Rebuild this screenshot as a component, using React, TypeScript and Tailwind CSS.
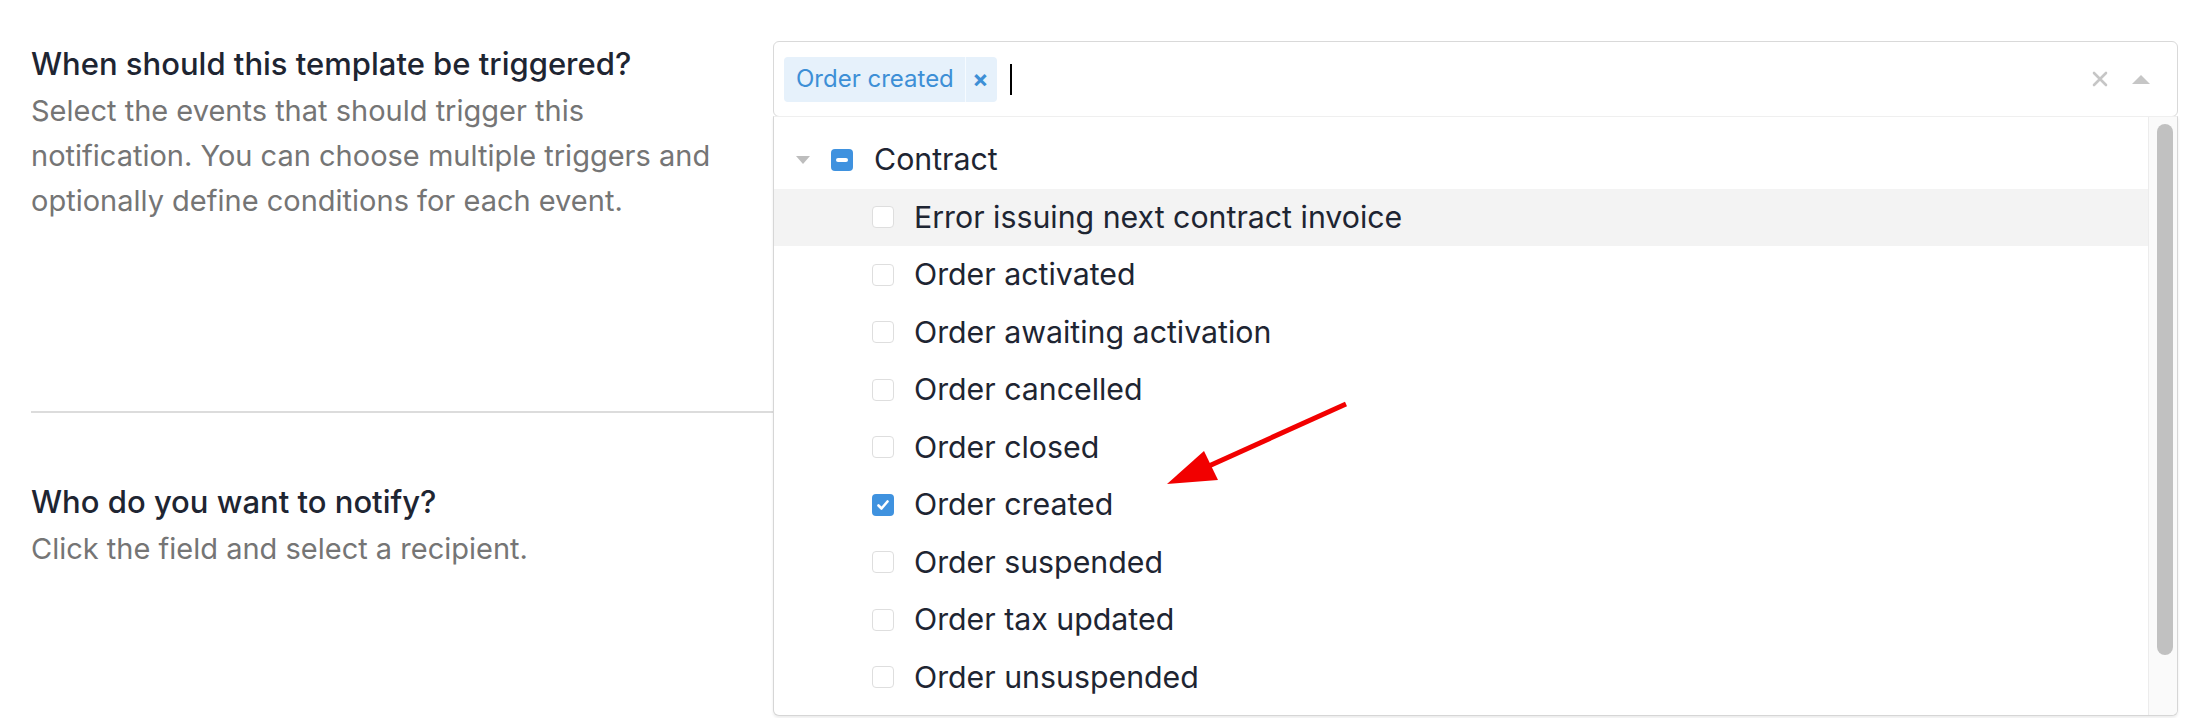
import React from "react";

const items = [
  "Error issuing next contract invoice",
  "Order activated",
  "Order awaiting activation",
  "Order cancelled",
  "Order closed",
  "Order created",
  "Order suspended",
  "Order tax updated",
  "Order unsuspended",
];

function Check({ checked }: { checked: boolean }) {
  if (checked) {
    return (
      <span className="flex h-[22px] w-[22px] shrink-0 items-center justify-center rounded-[4px] bg-[#3f92df]">
        <svg width="14" height="14" viewBox="0 0 14 14">
          <path d="M2.5 7.5 L5.5 10.5 L11.5 3.5" fill="none" stroke="#fff" strokeWidth="2.6" strokeLinecap="round" strokeLinejoin="round" />
        </svg>
      </span>
    );
  }
  return <span className="h-[22px] w-[22px] shrink-0 rounded-[4px] border-[1.5px] border-[#dedede] bg-white" />;
}

export default function App() {
  return (
    <div className="relative h-[718px] w-[2208px] overflow-hidden bg-white font-['Inter',sans-serif] text-[#1e2532]">
      <div className="flex flex-col pl-[31px] pr-[30px]">
        {/* Section 1 */}
        <div className="flex h-[411px] pt-[41px]">
          <div className="w-[742px] shrink-0">
            <div className="text-[31px] font-medium leading-[45px] text-[#1e2532]">When should this template be triggered?</div>
            <div className="mt-[2px] w-[700px] text-[29px] leading-[45px] text-[#757575]">
              Select the events that should trigger this notification. You can choose multiple triggers and optionally define conditions for each event.
            </div>
          </div>
          <div className="flex-1">
            <div className="flex h-[76px] items-center rounded-[6px] border border-[#d9d9d9] bg-white pl-[10px] pr-[26px]">
              <div className="flex h-[45px] items-center rounded-[4px] bg-[#e6f1fb]">
                <span className="pl-[12px] pr-[11px] text-[24px] text-[#3d8fd6]">Order created</span>
                <span className="h-full w-[1px] bg-[#f6fbff]" />
                <span className="flex w-[31px] items-center justify-center pr-[2px] text-[24px] font-bold text-[#3d8fd6]">×</span>
              </div>
              <span className="ml-[13px] h-[31px] w-[2px] bg-black" />
              <div className="flex-1" />
              <svg width="18" height="18" viewBox="0 0 18 18" className="mr-[22px]">
                <path d="M3 3 L15 15 M15 3 L3 15" stroke="#c6c6c6" strokeWidth="2.6" strokeLinecap="round" />
              </svg>
              <svg width="20" height="10" viewBox="0 0 20 10">
                <path d="M1 10 L10 1 L19 10 Z" fill="#c6c6c6" />
              </svg>
            </div>
          </div>
        </div>
        <div className="h-[2px] bg-[#dcdcdc]" />
        {/* Section 2 */}
        <div className="pt-[66px]">
          <div className="text-[31px] font-medium leading-[45px] text-[#1e2532]">Who do you want to notify?</div>
          <div className="mt-[2px] text-[29px] leading-[45px] text-[#757575]">Click the field and select a recipient.</div>
        </div>
      </div>

      {/* Dropdown menu */}
      <div className="absolute left-[773px] top-[116px] flex h-[600px] w-[1405px] overflow-hidden rounded-b-[6px] border border-[#d6d6d6] border-t-[#efefef] bg-white shadow-[0_2px_3px_rgba(0,0,0,0.08)]">
        <div className="flex-1 pt-[14px]">
          <div className="flex h-[57.5px] items-center pl-[22px]">
            <svg width="14" height="8" viewBox="0 0 14 8" className="shrink-0">
              <path d="M0 0 L14 0 L7 8 Z" fill="#bdbdbd" />
            </svg>
            <span className="ml-[21px] flex h-[22px] w-[22px] shrink-0 items-center justify-center rounded-[4px] bg-[#3f92df]">
              <span className="h-[4px] w-[12px] rounded-[2px] bg-white" />
            </span>
            <span className="ml-[21px] text-[30.3px] text-[#1e2532]">Contract</span>
          </div>
          {items.map((it, i) => (
            <div
              key={it}
              className={`flex h-[57.5px] items-center pl-[98px] ${i === 0 ? "bg-[#f3f3f3]" : ""}`}
            >
              <Check checked={it === "Order created"} />
              <span className="ml-[20px] text-[30.3px] text-[#1e2532]">{it}</span>
            </div>
          ))}
        </div>
        <div className="w-[29px] shrink-0 border-l border-[#ececec] bg-[#fafafa] pt-[7px]">
          <div className="ml-[8px] h-[531px] w-[16px] rounded-full bg-[#c1c1c1]" />
        </div>
      </div>

      {/* Red annotation arrow */}
      <svg className="absolute left-0 top-0" width="2208" height="718" viewBox="0 0 2208 718">
        <line x1="1346" y1="404" x2="1200" y2="470" stroke="#f20000" strokeWidth="5" />
        <polygon points="1167,484 1204,451 1218,480" fill="#f20000" />
      </svg>
    </div>
  );
}
